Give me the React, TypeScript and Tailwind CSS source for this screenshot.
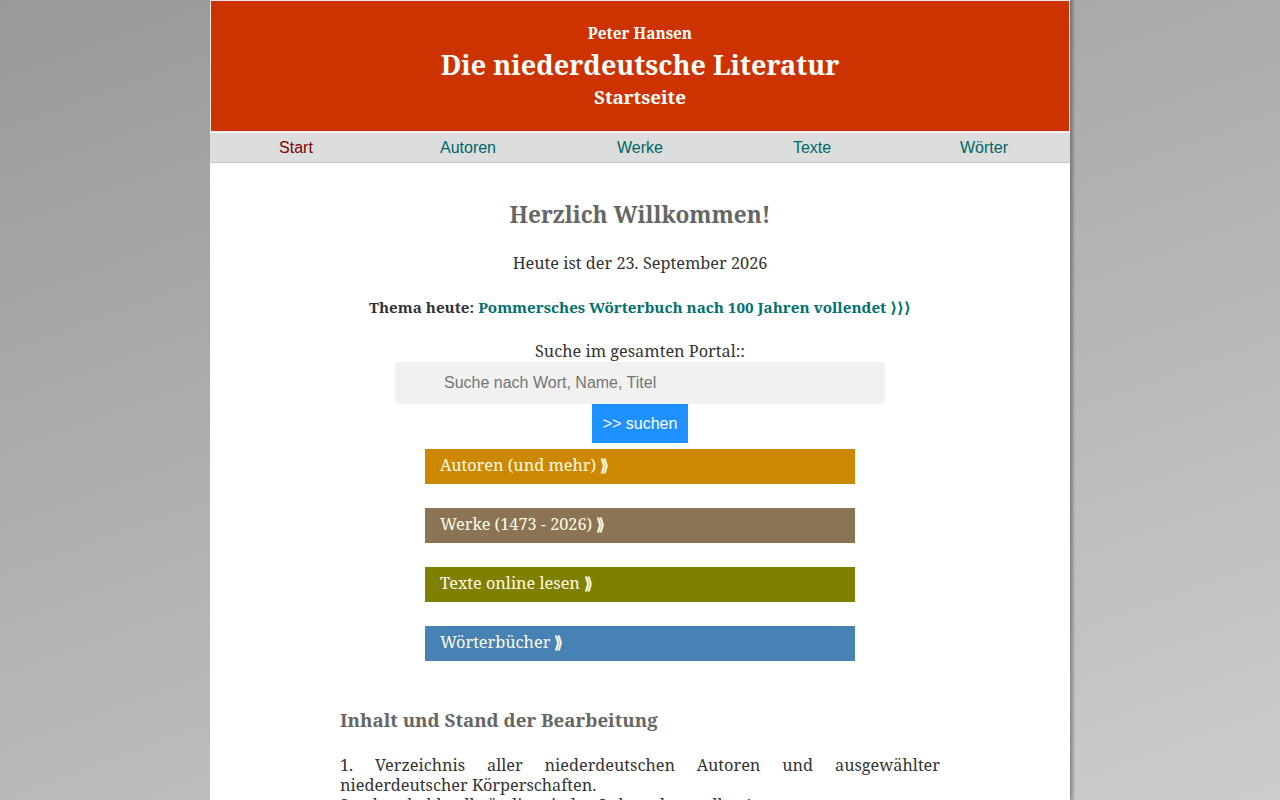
import React from "react";

const serif = { fontFamily: '"Noto Serif", "DejaVu Serif", serif' };
const sans = { fontFamily: '"Liberation Sans", Arial, sans-serif' };

export default function App() {
  const bars = [
    { label: "Autoren (und mehr)", color: "bg-[#cc8800]" },
    { label: "Werke (1473 - 2026)", color: "bg-[#8b7355]" },
    { label: "Texte online lesen", color: "bg-[#808000]" },
    { label: "Wörterbücher", color: "bg-[#4682b4]" },
  ];
  const nav = ["Start", "Autoren", "Werke", "Texte", "Wörter"];
  return (
    <div className="min-h-screen h-[800px] overflow-hidden bg-[linear-gradient(160deg,#999999_0%,#cccccc_100%)]">
      <div className="mx-auto w-[860px] h-[800px] bg-white shadow-[3px_0_3px_rgba(0,0,0,0.3)]" style={serif}>
        <header className="h-[132px] border border-[#e6e6e6] bg-[#cc3300] text-white flex flex-col items-center pt-[22px]">
          <div className="text-[15.4px] font-bold leading-[22px]">Peter Hansen</div>
          <div className="text-[27px] font-bold leading-[38px] mt-[1px]">Die niederdeutsche Literatur</div>
          <div className="text-[18.8px] font-bold leading-[26px] mt-0">Startseite</div>
        </header>
        <nav className="mt-[1px] h-[30px] bg-[#dcdddd] border-b border-[#c8c8c8] grid grid-cols-5" style={sans}>
          {nav.map((n, i) => (
            <div key={n} className={`flex items-center justify-center text-[16px] ${i === 0 ? "text-[#800000]" : "text-[#006666]"}`}>{n}</div>
          ))}
        </nav>
        <main className="flex flex-col items-center">
          <h2 className="mt-[37px] text-[22.6px] font-bold leading-[30px] text-[#666666]">Herzlich Willkommen!</h2>
          <p className="mt-[23px] text-[16.3px] leading-[20px] text-[#333333]">Heute ist der 23. September 2026</p>
          <p className="mt-[24px] text-[15.2px] leading-[20px] font-bold text-[#333333]">
            Thema heute: <span className="text-[#007070]">Pommersches Wörterbuch nach 100 Jahren vollendet ⟩⟩⟩</span>
          </p>
          <p className="mt-[24px] text-[16.3px] leading-[20px] text-[#333333]">Suche im gesamten Portal::</p>
          <div className="mt-[1px] w-[490px] h-[42px] rounded-[4px] bg-[#f1f1f1] flex items-center pl-[49px] text-[16px] text-[#757575]" style={sans}>
            Suche nach Wort, Name, Titel
          </div>
          <div className="w-[96px] h-[39px] bg-[#1e90ff] text-white text-[16px] flex items-center justify-center" style={sans}>
            &gt;&gt; suchen
          </div>
          <div className="mt-[6px] flex flex-col gap-[24px]">
            {bars.map((b) => (
              <div key={b.label} className={`w-[430px] h-[35px] ${b.color} text-[#fffbe8] text-[16.3px] flex items-center pl-[15px] pb-[2px]`}>
                {b.label} <span className="ml-[4px] font-bold">⟫</span>
              </div>
            ))}
          </div>
          <div className="w-[600px] mt-[46px]">
            <h3 className="text-[18.7px] font-bold leading-[26px] text-[#666666]">Inhalt und Stand der Bearbeitung</h3>
            <p className="mt-[22px] text-[16.3px] leading-[20px] text-[#333333] text-justify">
              1. Verzeichnis aller niederdeutschen Autoren und ausgewählter niederdeutscher Körperschaften.
              <br />
              2. schon bald vollständig mit den Lebensdaten aller Autoren
            </p>
          </div>
        </main>
      </div>
    </div>
  );
}
